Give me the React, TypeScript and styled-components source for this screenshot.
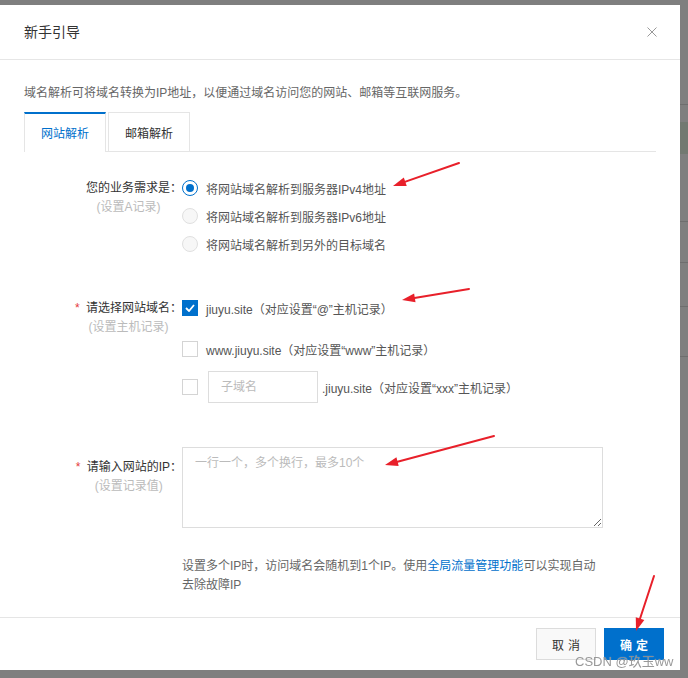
import React from "react";
import styled, { createGlobalStyle } from "styled-components";

const Global = createGlobalStyle`
  html, body { margin: 0; padding: 0; }
  body {
    width: 688px;
    height: 678px;
    overflow: hidden;
    background: #ffffff;
    font-family: "Liberation Sans", "Noto Sans CJK SC", sans-serif;
  }
  * { box-sizing: border-box; }
`;

/* ---------- background page (visible through the backdrop) ---------- */
const BgPage = styled.div`
  display: flex;
  flex-direction: column;
  height: 678px;
  padding-top: 104px;
`;
const BgRule = styled.div<{ $mt?: number }>`
  height: 1px;
  background: #dcdcdc;
  margin-top: ${(p) => p.$mt ?? 0}px;
`;
const BgBand = styled.div<{ $mt?: number }>`
  height: 32px;
  background: #e4f2e3;
  margin-top: ${(p) => p.$mt ?? 0}px;
`;

/* ---------- backdrop & modal ---------- */
const Backdrop = styled.div`
  position: fixed;
  inset: 0;
  background: rgba(0, 0, 0, 0.5);
  display: flex;
  align-items: flex-start;
  padding-top: 5px;
`;

const Modal = styled.div`
  width: 680px;
  height: 665px;
  background: #ffffff;
  display: flex;
  flex-direction: column;
`;

const Header = styled.div`
  height: 55px;
  flex: none;
  display: flex;
  align-items: center;
  justify-content: space-between;
  padding: 0 23px 0 24px;
  border-bottom: 1px solid #e6e6e6;
`;

const Title = styled.div`
  font-size: 14px;
  line-height: 20px;
  color: #333333;
`;

const CloseButton = styled.button`
  width: 10px;
  height: 10px;
  padding: 0;
  border: none;
  background: transparent;
  display: flex;
  cursor: pointer;
`;

const Body = styled.div`
  flex: 1;
  padding: 0 24px;
  display: flex;
  flex-direction: column;
`;

const Desc = styled.div`
  margin-top: 24px;
  font-size: 12px;
  line-height: 18px;
  color: #666666;
`;

const TabBar = styled.div`
  margin-top: 10px;
  height: 40px;
  display: flex;
  align-items: flex-start;
  gap: 2px;
  border-bottom: 1px solid #e5e5e5;
`;

const Tab = styled.div<{ $active?: boolean }>`
  width: 82px;
  height: ${(p) => (p.$active ? 40 : 39)}px;
  margin-bottom: ${(p) => (p.$active ? -1 : 0)}px;
  border: 1px solid #e5e5e5;
  border-bottom: none;
  border-top: ${(p) => (p.$active ? "2px solid #0070cc" : "1px solid #e5e5e5")};
  background: #ffffff;
  color: ${(p) => (p.$active ? "#0070cc" : "#333333")};
  font-size: 12px;
  display: flex;
  align-items: center;
  justify-content: center;
  padding-bottom: ${(p) => (p.$active ? 1 : 0)}px;
`;

const Section = styled.div<{ $mt: number }>`
  display: grid;
  grid-template-columns: 158px 1fr;
  margin-top: ${(p) => p.$mt}px;
`;

const LabelCell = styled.div<{ $offset?: number }>`
  display: flex;
  justify-content: flex-end;
  align-items: flex-start;
  padding-top: ${(p) => p.$offset ?? 0}px;
`;

const LabelBlock = styled.div`
  display: inline-flex;
  flex-direction: column;
  align-items: center;
`;

const LabelMain = styled.div`
  padding-top: 4px;
  font-size: 12px;
  line-height: 20px;
  color: #333333;
  white-space: nowrap;
`;

const Star = styled.span<{ $hidden?: boolean }>`
  display: inline-block;
  width: 11px;
  color: #e4393c;
  visibility: ${(p) => (p.$hidden ? "hidden" : "visible")};
`;

const SubLabel = styled.div`
  font-size: 12px;
  line-height: 18px;
  color: #bbbbbb;
  white-space: nowrap;
`;

const Controls = styled.div`
  display: flex;
  flex-direction: column;
`;

const OptionRow = styled.div<{ $h?: number; $mt?: number }>`
  height: ${(p) => p.$h ?? 28}px;
  margin-top: ${(p) => p.$mt ?? 0}px;
  display: flex;
  align-items: center;
  font-size: 12px;
  color: #555555;
  white-space: nowrap;
`;

const Radio = styled.span<{ $checked?: boolean }>`
  width: 16px;
  height: 16px;
  border-radius: 50%;
  flex: none;
  margin-right: 8px;
  border: 1px solid ${(p) => (p.$checked ? "#0070cc" : "#e0e0e0")};
  background: ${(p) => (p.$checked ? "#ffffff" : "#f7f7f7")};
  display: flex;
  align-items: center;
  justify-content: center;
  &::after {
    content: "";
    width: 8px;
    height: 8px;
    border-radius: 50%;
    background: #0070cc;
    display: ${(p) => (p.$checked ? "block" : "none")};
  }
`;

const Checkbox = styled.span<{ $checked?: boolean; $gap?: number }>`
  width: 16px;
  height: 16px;
  flex: none;
  margin-right: ${(p) => p.$gap ?? 8}px;
  border: 1px solid ${(p) => (p.$checked ? "#0070cc" : "#d4d4d4")};
  background: ${(p) => (p.$checked ? "#0070cc" : "#ffffff")};
  display: flex;
  align-items: center;
  justify-content: center;
`;

const SubdomainInput = styled.input`
  width: 110px;
  height: 32px;
  border: 1px solid #dddddd;
  padding: 0 12px;
  margin-right: 4px;
  font-family: inherit;
  font-size: 12px;
  color: #333333;
  outline: none;
  &::placeholder { color: #bbbbbb; }
`;

const IpTextarea = styled.textarea`
  width: 421px;
  height: 81px;
  border: 1px solid #dddddd;
  padding: 6px 12px;
  font-family: inherit;
  font-size: 12px;
  line-height: 18px;
  color: #333333;
  outline: none;
  display: block;
  &::placeholder { color: #bbbbbb; }
`;

const Help = styled.div`
  margin-top: 29px;
  width: 421px;
  font-size: 12px;
  line-height: 19px;
  color: #666666;
`;

const Link = styled.a`
  color: #0070cc;
  text-decoration: none;
`;

const Footer = styled.div`
  flex: none;
  height: 53px;
  border-top: 1px solid #e5e5e5;
  display: flex;
  justify-content: flex-end;
  align-items: flex-start;
  gap: 8px;
  padding: 10px 16px 0 0;
`;

const Button = styled.button<{ $primary?: boolean }>`
  width: 60px;
  height: 32px;
  padding: 0 0 0 4px;
  font-family: inherit;
  font-size: 12px;
  letter-spacing: 4px;
  font-weight: ${(p) => (p.$primary ? 700 : 400)};
  border: 1px solid ${(p) => (p.$primary ? "#0070cc" : "#dcdcdc")};
  background: ${(p) => (p.$primary ? "#0070cc" : "#f9f9f9")};
  color: ${(p) => (p.$primary ? "#ffffff" : "#333333")};
  cursor: pointer;
`;

/* ---------- annotations over the screenshot ---------- */
const AnnotationLayer = styled.svg`
  position: fixed;
  left: 0;
  top: 0;
  width: 688px;
  height: 678px;
  pointer-events: none;
`;

const Watermark = styled.div`
  position: fixed;
  left: 575px;
  top: 654px;
  font-family: "Liberation Sans", "Noto Sans CJK SC", sans-serif;
  font-size: 13px;
  line-height: 16px;
  color: rgba(135, 135, 135, 0.85);
  text-shadow: 0 0 1px rgba(255, 255, 255, 0.6);
  white-space: nowrap;
  pointer-events: none;
`;

type Pt = [number, number];
const ARROWS: { from: Pt; to: Pt }[] = [
  { from: [459, 163], to: [393, 186] },
  { from: [469, 289], to: [402, 300] },
  { from: [494, 436], to: [385, 465] },
  { from: [654, 576], to: [636, 631] },
];

function Arrow({ from, to }: { from: Pt; to: Pt }) {
  const dx = to[0] - from[0];
  const dy = to[1] - from[1];
  const len = Math.hypot(dx, dy);
  const ux = dx / len;
  const uy = dy / len;
  const hl = 13;
  const hw = 4.5;
  const bx = to[0] - ux * hl;
  const by = to[1] - uy * hl;
  const px = -uy;
  const py = ux;
  const pts = `${to[0]},${to[1]} ${bx + px * hw},${by + py * hw} ${bx - px * hw},${by - py * hw}`;
  return (
    <g>
      <line x1={from[0]} y1={from[1]} x2={bx + ux * 2} y2={by + uy * 2} stroke="#e8202a" strokeWidth={2} strokeLinecap="round" />
      <polygon points={pts} fill="#e8202a" />
    </g>
  );
}

const CheckMark = () => (
  <svg width="10" height="8" viewBox="0 0 10 8">
    <polyline points="1,4 4,7 9,1" fill="none" stroke="#ffffff" strokeWidth="1.8" />
  </svg>
);

const CloseIcon = () => (
  <svg width="10" height="10" viewBox="0 0 10 10">
    <line x1="0.5" y1="0.5" x2="9.5" y2="9.5" stroke="#999999" strokeWidth="1" />
    <line x1="9.5" y1="0.5" x2="0.5" y2="9.5" stroke="#999999" strokeWidth="1" />
  </svg>
);

export default function App() {
  return (
    <>
      <Global />
      <BgPage>
        <BgRule />
        <BgBand $mt={17} />
        <BgRule $mt={67} />
        <BgRule $mt={40} />
        <BgRule $mt={43} />
        <BgRule $mt={49} />
      </BgPage>
      <Backdrop>
        <Modal>
          <Header>
            <Title>新手引导</Title>
            <CloseButton aria-label="关闭">
              <CloseIcon />
            </CloseButton>
          </Header>
          <Body>
            <Desc>域名解析可将域名转换为IP地址，以便通过域名访问您的网站、邮箱等互联网服务。</Desc>
            <TabBar>
              <Tab $active>网站解析</Tab>
              <Tab>邮箱解析</Tab>
            </TabBar>

            <Section $mt={22}>
              <LabelCell>
                <LabelBlock>
                  <LabelMain>
                    <Star $hidden>*</Star>您的业务需求是：
                  </LabelMain>
                  <SubLabel>(设置A记录)</SubLabel>
                </LabelBlock>
              </LabelCell>
              <Controls>
                <OptionRow>
                  <Radio $checked />
                  将网站域名解析到服务器IPv4地址
                </OptionRow>
                <OptionRow>
                  <Radio />
                  将网站域名解析到服务器IPv6地址
                </OptionRow>
                <OptionRow>
                  <Radio />
                  将网站域名解析到另外的目标域名
                </OptionRow>
              </Controls>
            </Section>

            <Section $mt={36}>
              <LabelCell>
                <LabelBlock>
                  <LabelMain>
                    <Star>*</Star>请选择网站域名：
                  </LabelMain>
                  <SubLabel>(设置主机记录)</SubLabel>
                </LabelBlock>
              </LabelCell>
              <Controls>
                <OptionRow>
                  <Checkbox $checked>
                    <CheckMark />
                  </Checkbox>
                  jiuyu.site（对应设置“@”主机记录）
                </OptionRow>
                <OptionRow $mt={13}>
                  <Checkbox />
                  www.jiuyu.site（对应设置“www”主机记录）
                </OptionRow>
                <OptionRow $mt={8} $h={32}>
                  <Checkbox $gap={10} />
                  <SubdomainInput placeholder="子域名" />
                  .jiuyu.site（对应设置“xxx”主机记录）
                </OptionRow>
              </Controls>
            </Section>

            <Section $mt={44}>
              <LabelCell $offset={6}>
                <LabelBlock>
                  <LabelMain>
                    <Star>*</Star>请输入网站的IP：
                  </LabelMain>
                  <SubLabel>(设置记录值)</SubLabel>
                </LabelBlock>
              </LabelCell>
              <Controls>
                <IpTextarea placeholder="一行一个，多个换行，最多10个" />
                <Help>
                  设置多个IP时，访问域名会随机到1个IP。使用<Link href="#">全局流量管理功能</Link>可以实现自动
                  <br />
                  去除故障IP
                </Help>
              </Controls>
            </Section>
          </Body>
          <Footer>
            <Button>取消</Button>
            <Button $primary>确定</Button>
          </Footer>
        </Modal>
      </Backdrop>
      <AnnotationLayer viewBox="0 0 688 678">
        {ARROWS.map((a, i) => (
          <Arrow key={i} from={a.from} to={a.to} />
        ))}
      </AnnotationLayer>
      <Watermark>CSDN @玖玉ww</Watermark>
    </>
  );
}
